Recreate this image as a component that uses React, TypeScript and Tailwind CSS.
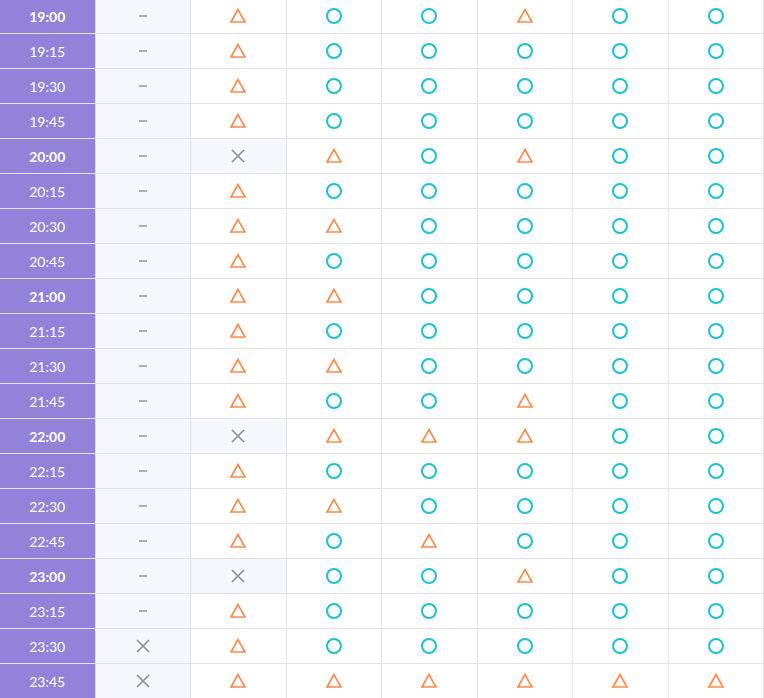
import React from "react";

type Mark = "d" | "x" | "t" | "o";

const rows: [string, boolean, string][] = [
  ["19:00", true, "dtootoo"],
  ["19:15", false, "dtooooo"],
  ["19:30", false, "dtooooo"],
  ["19:45", false, "dtooooo"],
  ["20:00", true, "dxtotoo"],
  ["20:15", false, "dtooooo"],
  ["20:30", false, "dttoooo"],
  ["20:45", false, "dtooooo"],
  ["21:00", true, "dttoooo"],
  ["21:15", false, "dtooooo"],
  ["21:30", false, "dttoooo"],
  ["21:45", false, "dtootoo"],
  ["22:00", true, "dxtttoo"],
  ["22:15", false, "dtooooo"],
  ["22:30", false, "dttoooo"],
  ["22:45", false, "dtotooo"],
  ["23:00", true, "dxootoo"],
  ["23:15", false, "dtooooo"],
  ["23:30", false, "xtooooo"],
  ["23:45", false, "xtttttt"],
];

function Icon({ m }: { m: Mark }) {
  if (m === "o")
    return (
      <svg width="18" height="18" viewBox="0 0 18 18">
        <circle cx="9" cy="9" r="7" fill="none" stroke="#1cc2cc" strokeWidth="2" />
      </svg>
    );
  if (m === "t")
    return (
      <svg width="18" height="18" viewBox="0 0 18 18">
        <path d="M9 2.6 L16 15 L2 15 Z" fill="none" stroke="#ff8a4a" strokeWidth="1.7" strokeLinejoin="miter" />
      </svg>
    );
  if (m === "x")
    return (
      <svg width="18" height="18" viewBox="0 0 18 18">
        <path d="M3 3 L15 15 M15 3 L3 15" fill="none" stroke="#8f909e" strokeWidth="1.7" />
      </svg>
    );
  return (
    <svg width="18" height="18" viewBox="0 0 18 18">
      <rect x="5" y="8" width="8" height="2" fill="#acaebb" />
    </svg>
  );
}

export default function App() {
  return (
    <div
      className="w-[764px] h-[698px] overflow-hidden bg-white"
      style={{ fontFamily: "Lato, 'Noto Sans', sans-serif" }}
    >
      <div className="-mt-px grid grid-cols-8">
        {rows.map(([time, bold, marks]) => (
          <React.Fragment key={time}>
            <div
              className={`h-[35px] flex items-center justify-center bg-[#9282d9] text-white text-[14px] border-b border-b-[#e6e2f7] border-r border-r-[#dcdbe8] ${
                bold ? "font-bold" : "font-normal"
              }`}
            >
              {time}
            </div>
            {marks.split("").map((m, i) => {
              const shaded = i === 0 || m === "x";
              return (
                <div
                  key={i}
                  className={`h-[35px] flex items-center justify-center border-b border-r border-[#e2e2ec] ${
                    shaded ? "bg-[#f6f7fb]" : "bg-white"
                  }`}
                >
                  <Icon m={m as Mark} />
                </div>
              );
            })}
          </React.Fragment>
        ))}
      </div>
    </div>
  );
}
